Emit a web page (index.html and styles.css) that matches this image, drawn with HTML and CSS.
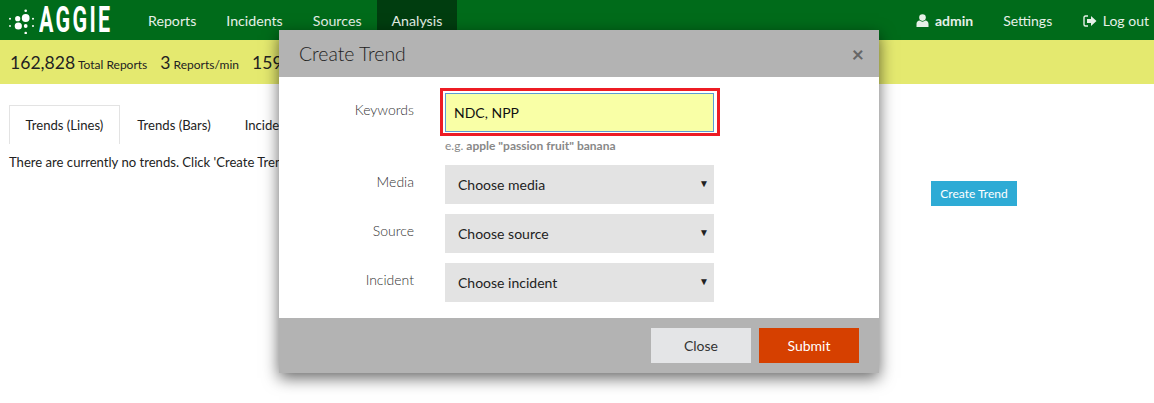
FILE: index.html
```html
<!DOCTYPE html>
<html>
<head>
    <title>Aggie</title>
    <link rel="stylesheet" href="styles.css">
</head>
<body>
    <nav class="navbar">
        <a class="brand">
            <svg class="brand-dots" width="28" height="28" viewBox="8 6 28 28">
                <circle cx="25.7" cy="10.7" r="1.3"/>
                <circle cx="10" cy="18.7" r="1"/>
                <circle cx="17.7" cy="18.7" r="2.6"/>
                <circle cx="25.7" cy="18" r="3.9"/>
                <circle cx="33" cy="18.7" r="1"/>
                <circle cx="10" cy="26" r="0.9"/>
                <circle cx="18.3" cy="26" r="3.6"/>
                <circle cx="25.7" cy="26" r="1.9"/>
                <circle cx="33" cy="26" r="1"/>
                <circle cx="25.7" cy="33" r="1.3"/>
            </svg>
            <span class="brand-text">AGGIE</span>
        </a>
        <ul class="nav-left">
            <li><a>Reports</a></li>
            <li><a>Incidents</a></li>
            <li><a>Sources</a></li>
            <li class="active"><a>Analysis</a></li>
        </ul>
        <ul class="nav-right">
            <li><a class="user">
                <svg class="nav-icon" width="13" height="13" viewBox="0 0 13 13"><circle cx="6.5" cy="3.6" r="3.3"/><path d="M0.5 13V10C0.5 8 2 6.6 3.6 6.6C4.4 7.3 5.4 7.7 6.5 7.7C7.6 7.7 8.6 7.3 9.4 6.6C11 6.6 12.5 8 12.5 10V13Z"/></svg>
                admin</a></li>
            <li><a>Settings</a></li>
            <li class="logout"><a>
                <svg class="nav-icon" width="14" height="12" viewBox="0 0 14 12"><path d="M5 1H2.5C1.5 1 1 1.6 1 2.5V9.5C1 10.4 1.5 11 2.5 11H5" fill="none" stroke="#e6f0e8" stroke-width="1.4"/><path d="M8 1L13.5 6L8 11V8H4V4H8Z"/></svg>
                Log out</a></li>
        </ul>
    </nav>

    <div class="stats">
        <span class="stat"><b>162,828</b> Total Reports</span>
        <span class="stat"><b>3</b> Reports/min</span>
        <span class="stat"><b>159</b></span>
    </div>

    <main class="content">
        <div class="trends">
            <ul class="tabs">
                <li class="active"><a>Trends (Lines)</a></li>
                <li><a>Trends (Bars)</a></li>
                <li><a>Incidents</a></li>
            </ul>
            <p class="empty">There are currently no trends. Click 'Create Trend' to add one.</p>
        </div>
        <button class="create-btn">Create Trend</button>
    </main>

    <div class="modal">
        <div class="modal-header">
            <h2>Create Trend</h2>
            <span class="modal-x">&times;</span>
        </div>
        <form class="modal-body">
            <div class="field field-keywords">
                <label for="keywords">Keywords</label>
                <div class="control">
                    <div class="highlight">
                        <input type="text" id="keywords" value="NDC, NPP">
                    </div>
                    <p class="hint">e.g. <b>apple "passion fruit" banana</b></p>
                </div>
            </div>
            <div class="field">
                <label>Media</label>
                <div class="select">Choose media<span class="caret">&#9660;</span></div>
            </div>
            <div class="field">
                <label>Source</label>
                <div class="select">Choose source<span class="caret">&#9660;</span></div>
            </div>
            <div class="field">
                <label>Incident</label>
                <div class="select">Choose incident<span class="caret">&#9660;</span></div>
            </div>
        </form>
        <div class="modal-footer">
            <button class="btn-close">Close</button>
            <button class="btn-submit">Submit</button>
        </div>
    </div>
</body>
</html>
```

FILE: styles.css
```css
html, body {
    height: 100%;
}

body {
    margin: 0;
    font-family: 'Lato', Arial, sans-serif;
    font-size: 14px;
    color: #222;
    background-color: #fff;
    overflow: hidden;
}

ul {
    list-style: none;
    margin: 0;
    padding: 0;
}

.navbar {
    display: flex;
    height: 40px;
    background-color: #006b1a;
    color: #e6f0e8;
}

.brand {
    display: flex;
    align-items: center;
    width: 133px;
    padding-left: 8px;
    box-sizing: border-box;
}

.brand-dots {
    flex: none;
    fill: #fff;
}

.brand-text {
    display: inline-block;
    margin-left: 3px;
    font-family: 'Roboto', Arial, sans-serif;
    font-size: 37px;
    font-weight: 700;
    line-height: 40px;
    color: #fff;
    letter-spacing: 4px;
    transform: scaleX(0.58);
    transform-origin: left center;
}

.nav-left, .nav-right {
    display: flex;
}

.nav-left li a, .nav-right li a {
    display: block;
    padding: 0 15px;
    line-height: 41px;
    font-size: 14px;
}

.nav-left li a {
    font-size: 14.2px;
}

.nav-left li.active {
    background-color: #003d0f;
}

.nav-right {
    margin-left: auto;
}

.nav-right .logout a {
    padding-right: 5px;
    padding-left: 16px;
}

.nav-right .user {
    font-weight: bold;
}

.nav-icon {
    fill: #e6f0e8;
    margin-right: 2px;
    vertical-align: -1px;
}

.stats {
    display: flex;
    align-items: center;
    gap: 13px;
    height: 44px;
    padding-left: 10px;
    background-color: #e4e96f;
    font-size: 12px;
    color: #222;
}

.stat b {
    font-size: 17.6px;
    font-weight: normal;
}

.content {
    display: flex;
    padding: 21px 9px 0;
}

.trends {
    width: 922px;
    font-size: 13.1px;
}

.tabs {
    display: flex;
    height: 39px;
}

.tabs li a {
    display: block;
    padding: 0 15.5px;
    line-height: 39px;
    border: 1px solid transparent;
    border-bottom: 0;
    height: 39px;
    box-sizing: border-box;
}

.tabs li.active a {
    border-color: #e3e3e3;
}

.tabs li + li a {
    margin-left: 1px;
}

.empty {
    margin: 8px 0 0;
    line-height: 20px;
}

.create-btn {
    align-self: flex-start;
    width: 86px;
    height: 25px;
    margin-top: 76px;
    padding: 0;
    border: none;
    background-color: #2eabd5;
    color: #fff;
    font-family: inherit;
    font-size: 12px;
}

.modal {
    position: absolute;
    left: 279px;
    top: 30px;
    width: 600px;
    background-color: #fff;
    box-shadow: 0 5px 15px rgba(0, 0, 0, 0.6);
}

.modal-header {
    display: flex;
    align-items: center;
    justify-content: space-between;
    height: 47px;
    padding: 0 15px 0 20px;
    background-color: #b3b3b3;
}

.modal-header h2 {
    margin: 0;
    font-size: 19.4px;
    font-weight: 300;
    color: #222;
}

.modal-x {
    font-size: 21px;
    font-weight: bold;
    color: #666;
}

.modal-body {
    height: 241px;
    box-sizing: border-box;
    padding-top: 11px;
}

.field {
    display: flex;
    margin-bottom: 10px;
}

.field-keywords {
    margin-bottom: 11px;
}

.field label {
    width: 135px;
    padding-top: 8px;
    text-align: right;
    font-weight: 300;
    color: #333;
}

.field-keywords label {
    padding-top: 13px;
}

.control {
    margin-left: 31px;
}

.highlight {
    width: 280px;
    box-sizing: border-box;
    margin-left: -5px;
    padding: 2px 3px 1px 2px;
    border: 3px solid #ed1c24;
}

.highlight input {
    display: block;
    box-sizing: border-box;
    width: 269px;
    height: 39px;
    padding: 0 8px;
    border: 1px solid #5b9bd5;
    background-color: #f9ffa6;
    font-family: inherit;
    font-size: 14px;
    color: #111;
}

.hint {
    margin: 2px 0 0;
    font-size: 12px;
    line-height: 16px;
    color: #888;
}

.select {
    display: flex;
    align-items: center;
    justify-content: space-between;
    box-sizing: border-box;
    width: 269px;
    height: 39px;
    margin-left: 31px;
    padding: 0 5px 0 13px;
    background-color: #e3e3e3;
    color: #222;
}

.caret {
    font-size: 10px;
    margin-bottom: 3px;
}

.modal-footer {
    display: flex;
    justify-content: flex-end;
    gap: 8px;
    height: 55px;
    box-sizing: border-box;
    padding: 10px 20px 0 0;
    background-color: #b3b3b3;
}

.modal-footer button {
    width: 100px;
    height: 35px;
    border: none;
    font-family: inherit;
    font-size: 14px;
}

.btn-close {
    background-color: #e4e5e7;
    color: #333;
}

.btn-submit {
    background-color: #d64000;
    color: #fff;
}
```
